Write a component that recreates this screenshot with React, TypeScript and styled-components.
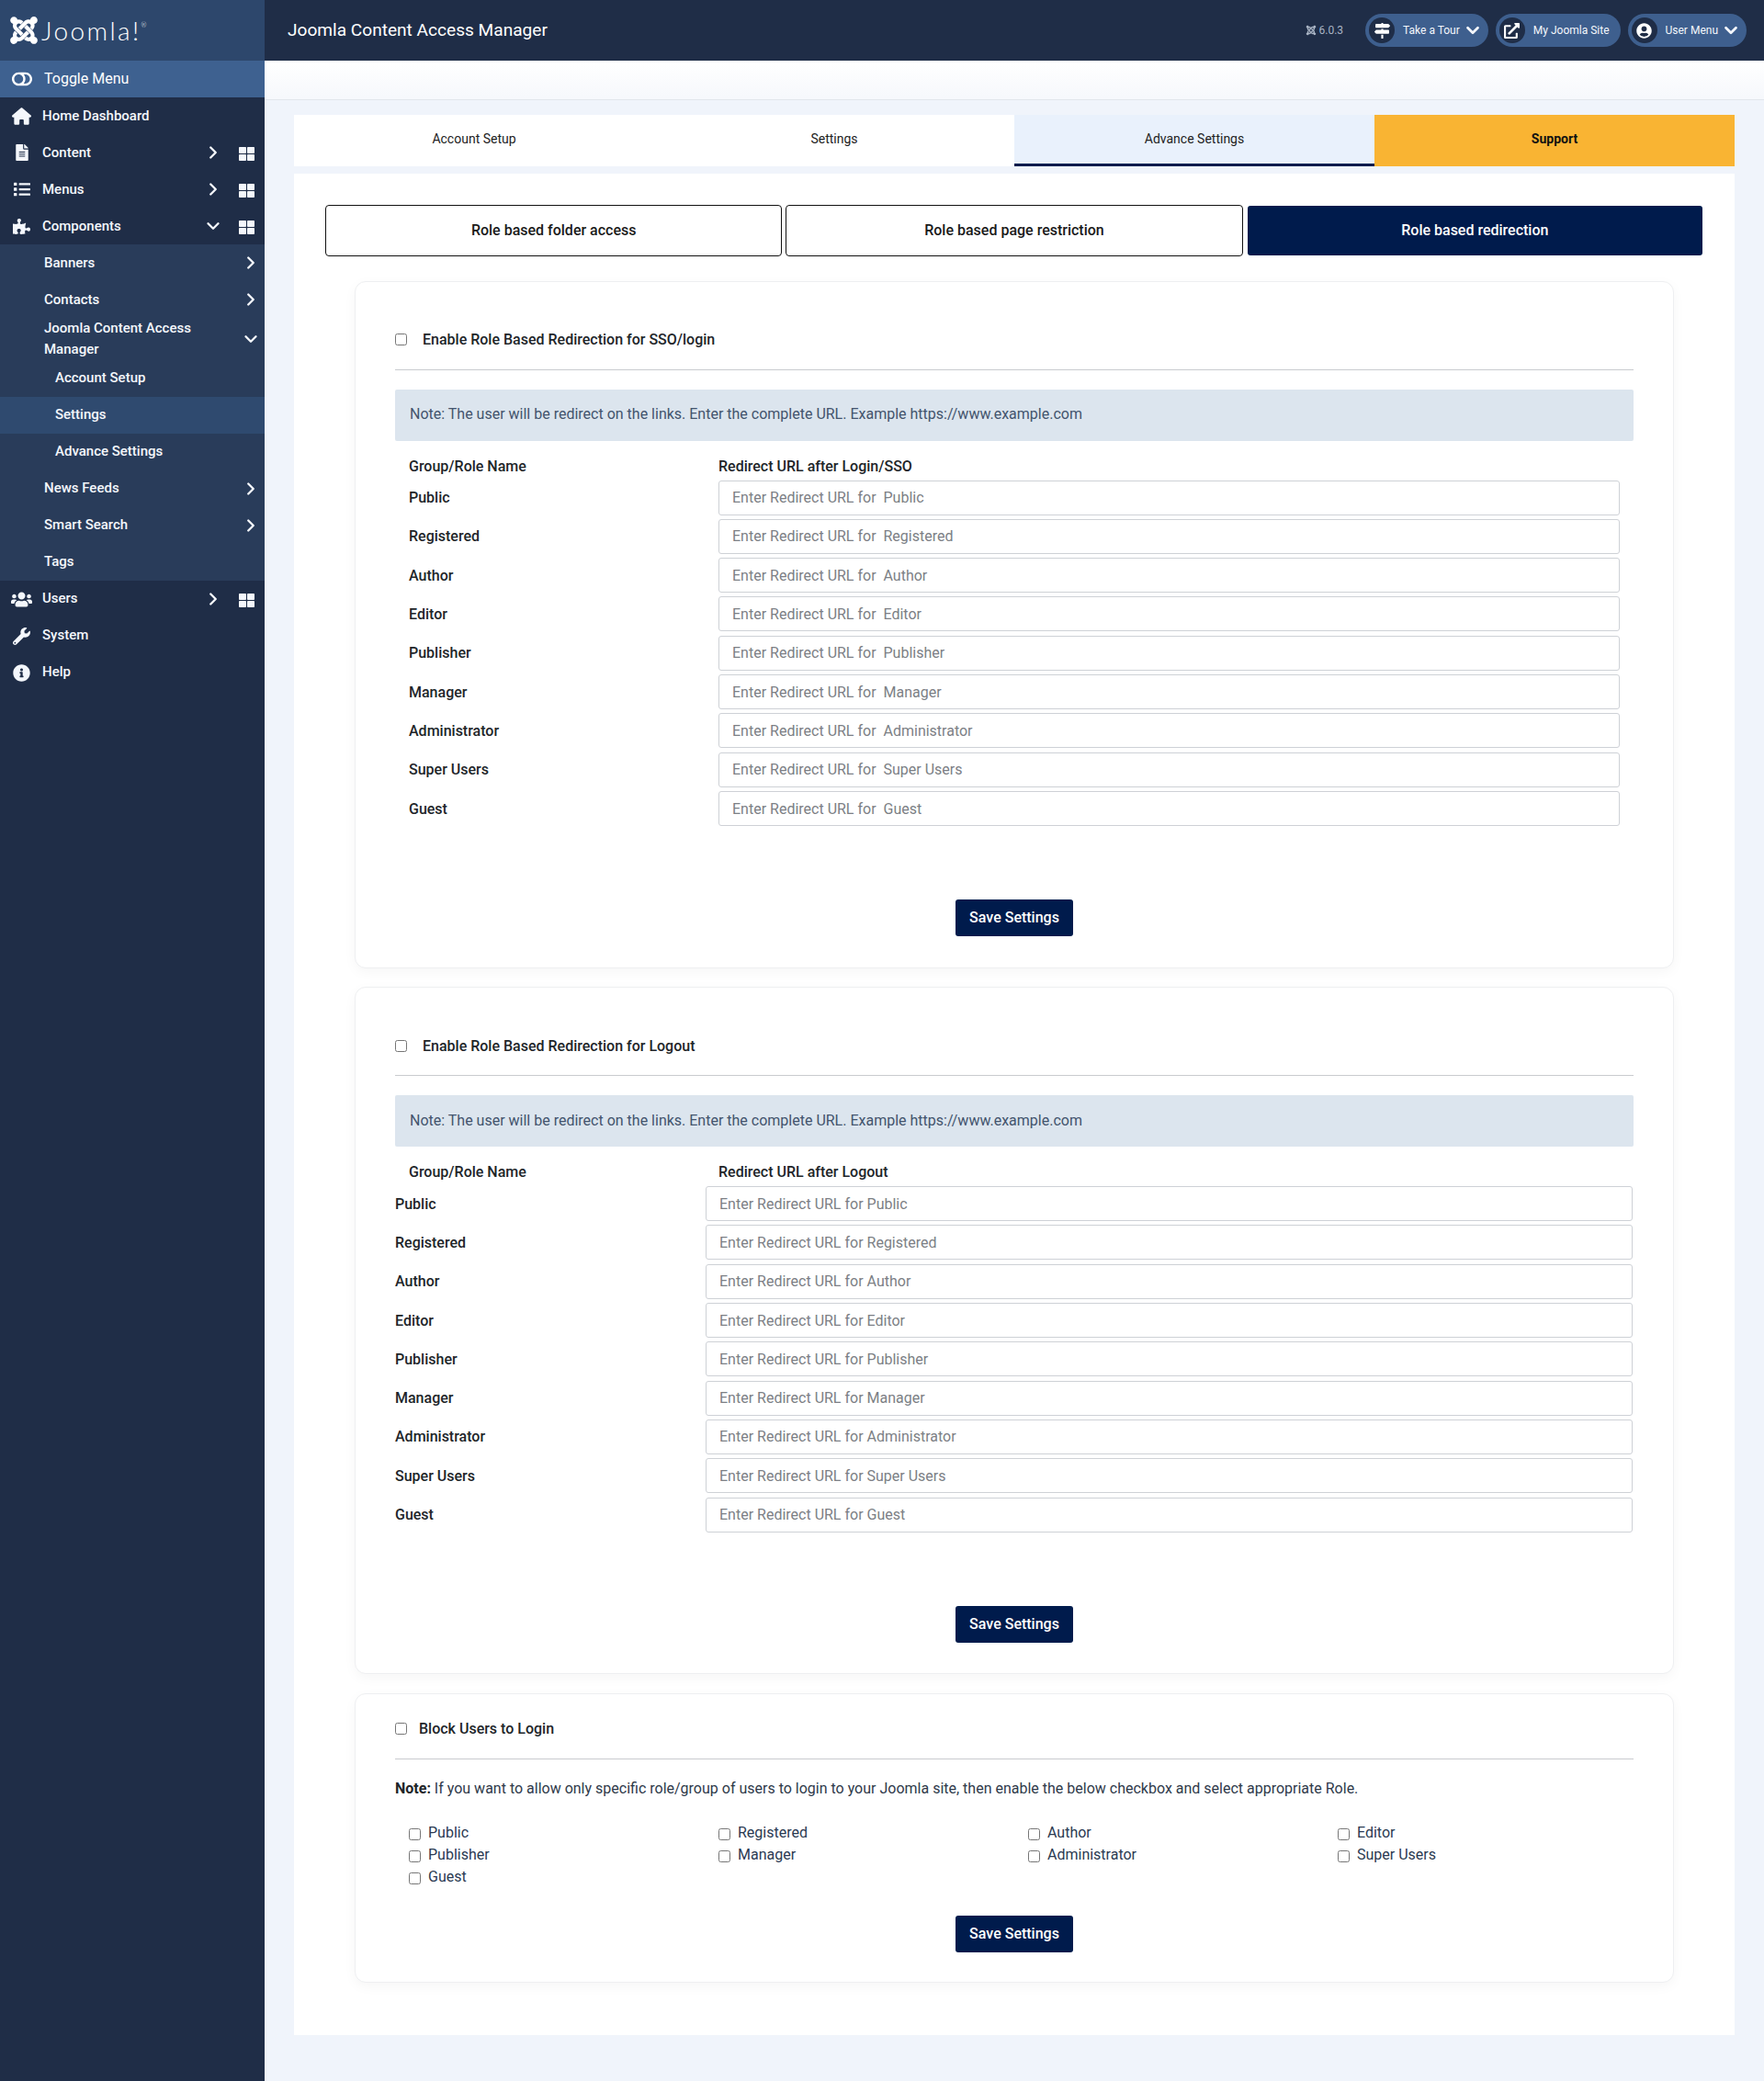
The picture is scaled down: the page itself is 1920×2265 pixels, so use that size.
import React from 'react'
import styled, { createGlobalStyle } from 'styled-components'
import { ChevronDown, ChevronRight } from 'lucide-react'
import {
  FaExternalLinkAlt,
  FaFileAlt,
  FaInfoCircle,
  FaJoomla,
  FaList,
  FaMapSigns,
  FaPuzzlePiece,
  FaThLarge,
  FaToggleOff,
  FaUserCircle,
  FaUsers,
  FaWrench,
} from 'react-icons/fa'
import { FaHouse } from 'react-icons/fa6'

const NAVY = '#001b4c'
const ROLES = ['Public', 'Registered', 'Author', 'Editor', 'Publisher', 'Manager', 'Administrator', 'Super Users', 'Guest']

const GlobalStyle = createGlobalStyle`
  html, body {
    margin: 0;
    padding: 0;
    background: #f0f4fb;
    font-family: Roboto, "Liberation Sans", sans-serif;
  }
  * { box-sizing: border-box; }
`

const Page = styled.div`
  display: grid;
  grid-template-columns: 288px 1fr;
  min-height: 2265px;
`

const Sidebar = styled.aside`
  background: #1f2d47;
  color: #fff;
`

const Brand = styled.div`
  height: 66px;
  background: #2d476c;
  display: flex;
  align-items: center;
  padding-left: 9px;
  gap: 2px;
  svg { font-size: 34px; }
`

const Wordmark = styled.span`
  font-family: Lato, sans-serif;
  font-weight: 300;
  font-size: 28px;
  letter-spacing: 2.4px;
  line-height: 1;
  sup {
    font-size: 7px;
    letter-spacing: 0;
    vertical-align: 14px;
    line-height: 0;
  }
`

const ToggleRow = styled.div`
  height: 40px;
  background: #3e6190;
  display: flex;
  align-items: center;
  padding: 0 0 1px 13px;
  font-size: 16px;
  gap: 13px;
  svg { font-size: 22px; }
`

const NavRow = styled.div<{ $level?: number; $active?: boolean }>`
  display: flex;
  align-items: center;
  min-height: 40px;
  font-size: 15px;
  font-weight: 500;
  line-height: 23px;
  padding-left: ${p => (p.$level === 2 ? 60 : p.$level === 1 ? 48 : 0)}px;
  background: ${p => (p.$active ? '#2f4a6f' : 'transparent')};
  color: #f4f7fc;
`

const NavIcon = styled.span<{ $size: number }>`
  width: 46px;
  display: flex;
  justify-content: center;
  padding-left: 1px;
  font-size: ${p => p.$size}px;
`

const NavLabel = styled.span<{ $lift?: boolean }>`
  flex: 1;
  padding-bottom: ${p => (p.$lift ? 2 : 0)}px;
`

const Expander = styled.span<{ $wide?: boolean }>`
  display: flex;
  justify-content: center;
  width: 24px;
  margin-right: ${p => (p.$wide ? 44 : 3)}px;
`

const Dash = styled.span`
  position: absolute;
  top: 13px;
  right: 11px;
  display: flex;
  font-size: 17px;
`

const TopRow = styled(NavRow)`
  position: relative;
`

const SubMenu = styled.div`
  background: #293c5a;
`

const Main = styled.main`
  min-width: 0;
`

const Header = styled.header`
  height: 66px;
  background: #1f2d47;
  display: flex;
  align-items: center;
  padding: 0 19px 0 25px;
  color: #fff;
`

const Title = styled.h1`
  flex: 1;
  margin: 0 0 2px;
  font-size: 19.1px;
  font-weight: 400;
`

const Version = styled.span`
  display: flex;
  align-items: center;
  gap: 3px;
  color: #a9b4c4;
  font-size: 12px;
  margin-right: 16px;
`

const Pill = styled.div`
  height: 36px;
  display: flex;
  align-items: center;
  background: #3e5f8e;
  border-radius: 18px;
  padding: 0 12px 0 4px;
  margin-left: 8px;
  font-size: 12px;
  color: #f4f7fc;
`

const PillIcon = styled.span`
  width: 28px;
  height: 28px;
  border-radius: 50%;
  background: #1f2d47;
  display: flex;
  align-items: center;
  justify-content: center;
  font-size: 17px;
  margin-right: 9px;
  color: #fff;
`

const PillCaret = styled.span`
  display: flex;
  margin: 0 -6px 0 3px;
`

const Toolbar = styled.div`
  height: 43px;
  background: linear-gradient(#fff, #f6f8fc);
  border-bottom: 1px solid #e2e6ec;
`

const Content = styled.div`
  padding: 16px 32px 50px;
`

const Tabs = styled.nav`
  display: grid;
  grid-template-columns: repeat(4, 1fr);
  height: 56px;
  background: #fff;
  margin-bottom: 8px;
`

const Tab = styled.div<{ $active?: boolean; $support?: boolean }>`
  display: flex;
  align-items: center;
  justify-content: center;
  padding-bottom: ${p => (p.$active ? 1 : 4)}px;
  font-size: 14px;
  color: ${p => (p.$support ? '#111' : '#222')};
  font-weight: ${p => (p.$support ? 700 : 400)};
  background: ${p => (p.$support ? '#f9b433' : p.$active ? '#e9f1fc' : 'transparent')};
  border-bottom: ${p => (p.$active ? `3px solid ${NAVY}` : 'none')};
`

const Panel = styled.section`
  background: #fff;
  padding: 34px 34px 57px;
`

const SubTabs = styled.div`
  display: grid;
  grid-template-columns: repeat(3, 1fr);
  gap: 4px;
  margin-bottom: 26.5px;
`

const SubTab = styled.button<{ $active?: boolean }>`
  height: 56px;
  padding-bottom: 2px;
  border: 1px solid ${p => (p.$active ? 'transparent' : '#111')};
  border-radius: 4px;
  background: ${p => (p.$active ? NAVY : '#fff')};
  background-clip: padding-box;
  color: ${p => (p.$active ? '#fff' : '#1a1a1a')};
  font: 500 16px Roboto, sans-serif;
`

const Card = styled.div<{ $compact?: boolean }>`
  margin: 0 32px 20.5px 32px;
  padding: ${p => (p.$compact ? '22px 43px 32px' : '47px 43px 33.4px')};
  background: #fff;
  border: 1px solid #eeeff1;
  border-radius: 12px;
  box-shadow: 0 4px 14px rgba(0, 0, 0, 0.04);
  &:last-child { margin-bottom: 0; }
`

const CardHead = styled.label<{ $gap: number }>`
  display: flex;
  align-items: center;
  height: 32px;
  gap: ${p => p.$gap}px;
  font-size: 16px;
  font-weight: 500;
  color: #212529;
  input { margin: 0; }
`

const Rule = styled.hr`
  height: 1px;
  border: 0;
  background: #c9cbcf;
  margin: 16px 0 21px;
`

const Note = styled.div`
  height: 56px;
  display: flex;
  align-items: center;
  padding: 0 16px 2px;
  background: #dce5ee;
  border-radius: 2px;
  font-size: 16px;
  color: #43546d;
`

const ColumnHead = styled.div`
  display: grid;
  grid-template-columns: 337px 1fr;
  padding-left: 15px;
  height: 21px;
  margin-top: 17px;
  margin-bottom: 5px;
  line-height: 21px;
  font-size: 16px;
  font-weight: 500;
  color: #212529;
`

const Rows = styled.div<{ $flush?: boolean }>`
  display: grid;
  grid-auto-rows: 38px;
  row-gap: 4.33px;
  padding: ${p => (p.$flush ? '0 1px 0 0' : '0 15px')};
`

const Row = styled.div<{ $flush?: boolean }>`
  display: grid;
  grid-template-columns: ${p => (p.$flush ? '338px' : '337px')} 1fr;
  align-items: center;
  font-size: 16px;
  font-weight: 500;
  color: #212529;
`

const UrlInput = styled.input`
  height: 38px;
  width: 100%;
  padding: 0 14px;
  border: 1px solid #ced1d6;
  border-radius: 3px;
  background: #fff;
  font: 400 16px Roboto, sans-serif;
  &::placeholder { color: #7c7f85; opacity: 1; }
`

const SaveRow = styled.div<{ $top: number }>`
  display: flex;
  justify-content: center;
  margin-top: ${p => p.$top}px;
`

const SaveButton = styled.button`
  width: 128px;
  height: 40px;
  padding-bottom: 2px;
  border: 0;
  border-radius: 3px;
  background: ${NAVY};
  color: #fff;
  font: 500 16px Roboto, sans-serif;
`

const BlockNote = styled.p`
  margin: -1px 0 24px;
  font-size: 16px;
  line-height: 24px;
  color: #2f3a4a;
  b { font-weight: 700; color: #212529; }
`

const RoleGrid = styled.div`
  display: grid;
  grid-template-columns: repeat(4, 1fr);
  grid-auto-rows: 24px;
`

const RoleOption = styled.label`
  display: flex;
  align-items: center;
  gap: 8px;
  padding-left: 15px;
  font-size: 16px;
  color: #2b3a52;
  input { margin: 4px 0 0; }
`

const Chevron = ({ open }: { open?: boolean }) =>
  open ? <ChevronDown size={22} strokeWidth={2.6} /> : <ChevronRight size={22} strokeWidth={2.6} />

const Caret = () => (
  <PillCaret>
    <ChevronDown size={22} strokeWidth={3} />
  </PillCaret>
)

const TopItem = ({
  icon,
  size,
  label,
  open,
  dash,
  lift,
}: {
  icon: React.ReactNode
  size: number
  label: string
  open?: boolean
  dash?: boolean
  lift?: boolean
}) => (
  <TopRow>
    <NavIcon $size={size}>{icon}</NavIcon>
    <NavLabel $lift={lift}>{label}</NavLabel>
    {dash && (
      <Expander $wide>
        <Chevron open={open} />
      </Expander>
    )}
    {dash && (
      <Dash>
        <FaThLarge />
      </Dash>
    )}
  </TopRow>
)

const Sub = ({ label, arrow, open, lift }: { label: string; arrow?: boolean; open?: boolean; lift?: boolean }) => (
  <NavRow $level={1}>
    <NavLabel $lift={lift}>{label}</NavLabel>
    {arrow && (
      <Expander>
        <Chevron open={open} />
      </Expander>
    )}
  </NavRow>
)

const RedirectCard = ({ title, column, flush }: { title: string; column: string; flush?: boolean }) => (
  <Card>
    <CardHead $gap={17}>
      <input type="checkbox" />
      {title}
    </CardHead>
    <Rule />
    <Note>Note: The user will be redirect on the links. Enter the complete URL. Example https://www.example.com</Note>
    <ColumnHead>
      <span>Group/Role Name</span>
      <span>{column}</span>
    </ColumnHead>
    <Rows $flush={flush}>
      {ROLES.map(role => (
        <Row key={role} $flush={flush}>
          <span>{role}</span>
          <UrlInput placeholder={flush ? `Enter Redirect URL for ${role}` : `Enter Redirect URL for  ${role}`} />
        </Row>
      ))}
    </Rows>
    <SaveRow $top={80}>
      <SaveButton>Save Settings</SaveButton>
    </SaveRow>
  </Card>
)

export default function App() {
  return (
    <Page>
      <GlobalStyle />
      <Sidebar>
        <Brand>
          <FaJoomla />
          <Wordmark>
            Joomla!<sup>®</sup>
          </Wordmark>
        </Brand>
        <ToggleRow>
          <FaToggleOff />
          Toggle Menu
        </ToggleRow>
        <TopItem icon={<FaHouse />} size={21} label="Home Dashboard" />
        <TopItem icon={<FaFileAlt />} size={18} label="Content" dash />
        <TopItem icon={<FaList />} size={18} label="Menus" dash />
        <TopItem icon={<FaPuzzlePiece />} size={19} label="Components" dash open />
        <SubMenu>
          <Sub label="Banners" arrow />
          <Sub label="Contacts" arrow />
          <Sub label="Joomla Content Access Manager" arrow open />
          <NavRow $level={2}>
            <NavLabel $lift>Account Setup</NavLabel>
          </NavRow>
          <NavRow $level={2} $active>
            <NavLabel $lift>Settings</NavLabel>
          </NavRow>
          <NavRow $level={2}>
            <NavLabel $lift>Advance Settings</NavLabel>
          </NavRow>
          <Sub label="News Feeds" arrow lift />
          <Sub label="Smart Search" arrow lift />
          <Sub label="Tags" lift />
        </SubMenu>
        <TopItem icon={<FaUsers />} size={23} label="Users" dash lift />
        <TopItem icon={<FaWrench />} size={19} label="System" lift />
        <TopItem icon={<FaInfoCircle />} size={19} label="Help" lift />
      </Sidebar>
      <Main>
        <Header>
          <Title>Joomla Content Access Manager</Title>
          <Version>
            <FaJoomla /> 6.0.3
          </Version>
          <Pill>
            <PillIcon>
              <FaMapSigns />
            </PillIcon>
            Take a Tour
            <Caret />
          </Pill>
          <Pill>
            <PillIcon>
              <FaExternalLinkAlt />
            </PillIcon>
            My Joomla Site
          </Pill>
          <Pill>
            <PillIcon>
              <FaUserCircle />
            </PillIcon>
            User Menu
            <Caret />
          </Pill>
        </Header>
        <Toolbar />
        <Content>
          <Tabs>
            <Tab>Account Setup</Tab>
            <Tab>Settings</Tab>
            <Tab $active>Advance Settings</Tab>
            <Tab $support>Support</Tab>
          </Tabs>
          <Panel>
            <SubTabs>
              <SubTab>Role based folder access</SubTab>
              <SubTab>Role based page restriction</SubTab>
              <SubTab $active>Role based redirection</SubTab>
            </SubTabs>
            <RedirectCard title="Enable Role Based Redirection for SSO/login" column="Redirect URL after Login/SSO" />
            <RedirectCard title="Enable Role Based Redirection for Logout" column="Redirect URL after Logout" flush />
            <Card $compact>
              <CardHead $gap={13}>
                <input type="checkbox" />
                Block Users to Login
              </CardHead>
              <Rule />
              <BlockNote>
                <b>Note:</b> If you want to allow only specific role/group of users to login to your Joomla site, then
                enable the below checkbox and select appropriate Role.
              </BlockNote>
              <RoleGrid>
                {ROLES.map(role => (
                  <RoleOption key={role}>
                    <input type="checkbox" />
                    {role}
                  </RoleOption>
                ))}
              </RoleGrid>
              <SaveRow $top={30}>
                <SaveButton>Save Settings</SaveButton>
              </SaveRow>
            </Card>
          </Panel>
        </Content>
      </Main>
    </Page>
  )
}
